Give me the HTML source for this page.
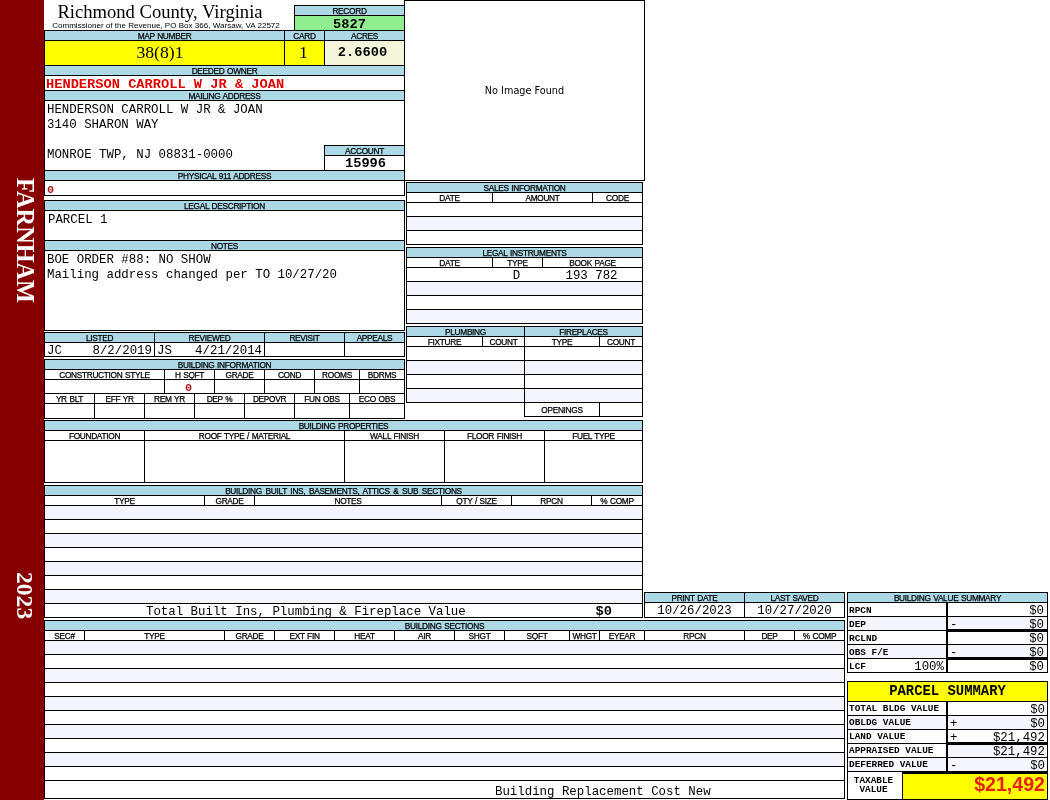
<!DOCTYPE html>
<html><head><meta charset="utf-8"><title>Richmond County, Virginia - Property Card</title>
<style>
html,body{margin:0;padding:0;background:#fff;}
body{width:1050px;height:800px;position:relative;overflow:hidden;font-family:"Liberation Sans",sans-serif;}
.r{position:absolute;}
.t{position:absolute;white-space:pre;color:#000;overflow:visible;will-change:transform;}
.h{font-family:"Liberation Sans",sans-serif;font-size:8.3px;text-align:center;letter-spacing:-0.3px;word-spacing:0.6px;-webkit-text-stroke:0.25px #000;}
.m{font-family:"Liberation Mono",monospace;font-size:12.4px;}
.mb{font-family:"Liberation Mono",monospace;font-size:13.7px;font-weight:bold;}
.ps{font-family:"Liberation Mono",monospace;font-size:13.9px;font-weight:bold;}
.sb{font-family:"Liberation Mono",monospace;font-size:9.4px;font-weight:bold;}
.ab{font-family:"Liberation Mono",monospace;font-size:11.8px;font-weight:bold;}
.c{text-align:center;}
.t.r{text-align:right;}
.red{color:#e00000;}
.dred{color:#aa1414;}
.title{font-family:"Liberation Serif",serif;font-size:18.6px;}
.sub{font-family:"Liberation Sans",sans-serif;font-size:8.06px;}
.big{font-family:"Liberation Serif",serif;font-size:17.7px;}
.side{font-family:"Liberation Serif",serif;font-weight:bold;font-size:24.3px;line-height:28px;height:28px;color:#fff;transform-origin:0 0;transform:rotate(90deg);}
.img{font-family:"DejaVu Sans","Liberation Sans",sans-serif;font-size:9.7px;}
.tot{font-family:"Liberation Sans",sans-serif;font-size:19.6px;font-weight:bold;color:#e8200c;}
</style></head>
<body>
<div class="r" style="left:0px;top:0px;width:44px;height:800px;background:#860000;"></div>
<div class="t side" style="left:39px;top:178px;">FARNHAM</div>
<div class="t side" style="left:39px;top:572px;font-size:23.6px;">2023</div>
<div class="t title c" style="left:41.5px;top:1px;width:236px;height:22px;line-height:22px;">Richmond County, Virginia</div>
<div class="t sub c" style="left:43px;top:20px;width:246px;height:11px;line-height:11px;">Commissioner of the Revenue, PO Box 366, Warsaw, VA 22572</div>
<div class="r" style="left:404px;top:0px;width:241px;height:181px;background:#000;"></div>
<div class="r" style="left:405px;top:1px;width:239px;height:179px;background:#fff;"></div>
<div class="t img c" style="left:405px;top:83.5px;width:239px;height:13px;line-height:13px;">No Image Found</div>
<div class="r" style="left:294px;top:5px;width:111px;height:26px;background:#000;"></div>
<div class="r" style="left:295px;top:6px;width:109px;height:9px;background:#add8e6;"></div>
<div class="t h" style="left:295px;top:5.75px;width:109px;height:11px;line-height:11px;">RECORD</div>
<div class="r" style="left:295px;top:16px;width:109px;height:14px;background:#90ee90;"></div>
<div class="t mb c" style="left:295px;top:16px;width:109px;height:17px;line-height:17px;">5827</div>
<div class="r" style="left:44px;top:30px;width:361px;height:166px;background:#000;"></div>
<div class="r" style="left:45px;top:31px;width:239px;height:9px;background:#add8e6;"></div>
<div class="t h" style="left:45px;top:30.75px;width:239px;height:11px;line-height:11px;">MAP NUMBER</div>
<div class="r" style="left:285px;top:31px;width:39px;height:9px;background:#add8e6;"></div>
<div class="t h" style="left:285px;top:30.75px;width:39px;height:11px;line-height:11px;">CARD</div>
<div class="r" style="left:325px;top:31px;width:79px;height:9px;background:#add8e6;"></div>
<div class="t h" style="left:325px;top:30.75px;width:79px;height:11px;line-height:11px;">ACRES</div>
<div class="r" style="left:45px;top:41px;width:239px;height:24px;background:#ffff00;"></div>
<div class="r" style="left:285px;top:41px;width:39px;height:24px;background:#ffff00;"></div>
<div class="r" style="left:325px;top:41px;width:79px;height:24px;background:#f5f5dc;"></div>
<div class="t big c" style="left:45px;top:41.75px;width:230px;height:21px;line-height:21px;">38(8)1</div>
<div class="t big c" style="left:284px;top:41.75px;width:39px;height:21px;line-height:21px;">1</div>
<div class="t mb c" style="left:324px;top:44px;width:77px;height:17px;line-height:17px;">2.6600</div>
<div class="r" style="left:45px;top:66px;width:359px;height:9px;background:#add8e6;"></div>
<div class="t h" style="left:45px;top:65.75px;width:359px;height:11px;line-height:11px;">DEEDED OWNER</div>
<div class="r" style="left:45px;top:76px;width:359px;height:14px;background:#fff;"></div>
<div class="t mb red" style="left:46px;top:76px;width:358px;height:17px;line-height:17px;">HENDERSON CARROLL W JR &amp; JOAN</div>
<div class="r" style="left:45px;top:91px;width:359px;height:9px;background:#add8e6;"></div>
<div class="t h" style="left:45px;top:90.75px;width:359px;height:11px;line-height:11px;">MAILING ADDRESS</div>
<div class="r" style="left:45px;top:101px;width:359px;height:69px;background:#fff;"></div>
<div class="t m" style="left:47px;top:102px;width:300px;height:16px;line-height:16px;">HENDERSON CARROLL W JR &amp; JOAN</div>
<div class="t m" style="left:47px;top:117px;width:300px;height:16px;line-height:16px;">3140 SHARON WAY</div>
<div class="t m" style="left:47px;top:147px;width:300px;height:16px;line-height:16px;">MONROE TWP, NJ 08831-0000</div>
<div class="r" style="left:324px;top:145px;width:81px;height:26px;background:#000;"></div>
<div class="r" style="left:325px;top:146px;width:79px;height:9px;background:#add8e6;"></div>
<div class="t h" style="left:325px;top:145.75px;width:79px;height:11px;line-height:11px;">ACCOUNT</div>
<div class="r" style="left:325px;top:156px;width:79px;height:14px;background:#fff;"></div>
<div class="t mb c" style="left:327px;top:155px;width:77px;height:17px;line-height:17px;">15996</div>
<div class="r" style="left:45px;top:171px;width:359px;height:9px;background:#add8e6;"></div>
<div class="t h" style="left:45px;top:170.75px;width:359px;height:11px;line-height:11px;">PHYSICAL 911 ADDRESS</div>
<div class="r" style="left:45px;top:181px;width:359px;height:14px;background:#fff;"></div>
<div class="t ab dred" style="left:46.5px;top:182.5px;width:100px;height:15px;line-height:15px;">0</div>
<div class="r" style="left:44px;top:200px;width:361px;height:131px;background:#000;"></div>
<div class="r" style="left:45px;top:201px;width:359px;height:9px;background:#add8e6;"></div>
<div class="t h" style="left:45px;top:200.75px;width:359px;height:11px;line-height:11px;">LEGAL DESCRIPTION</div>
<div class="r" style="left:45px;top:211px;width:359px;height:29px;background:#fff;"></div>
<div class="t m" style="left:47.5px;top:212px;width:350px;height:16px;line-height:16px;">PARCEL 1</div>
<div class="r" style="left:45px;top:241px;width:359px;height:9px;background:#add8e6;"></div>
<div class="t h" style="left:45px;top:240.75px;width:359px;height:11px;line-height:11px;">NOTES</div>
<div class="r" style="left:45px;top:251px;width:359px;height:79px;background:#fff;"></div>
<div class="t m" style="left:47px;top:252px;width:355px;height:16px;line-height:16px;">BOE ORDER #88: NO SHOW</div>
<div class="t m" style="left:47px;top:267px;width:355px;height:16px;line-height:16px;">Mailing address changed per TO 10/27/20</div>
<div class="r" style="left:44px;top:332px;width:361px;height:25px;background:#000;"></div>
<div class="r" style="left:45px;top:333px;width:109px;height:9px;background:#add8e6;"></div>
<div class="t h" style="left:45px;top:332.75px;width:109px;height:11px;line-height:11px;">LISTED</div>
<div class="r" style="left:45px;top:343px;width:109px;height:13px;background:#fff;"></div>
<div class="r" style="left:155px;top:333px;width:109px;height:9px;background:#add8e6;"></div>
<div class="t h" style="left:155px;top:332.75px;width:109px;height:11px;line-height:11px;">REVIEWED</div>
<div class="r" style="left:155px;top:343px;width:109px;height:13px;background:#fff;"></div>
<div class="r" style="left:265px;top:333px;width:79px;height:9px;background:#add8e6;"></div>
<div class="t h" style="left:265px;top:332.75px;width:79px;height:11px;line-height:11px;">REVISIT</div>
<div class="r" style="left:265px;top:343px;width:79px;height:13px;background:#fff;"></div>
<div class="r" style="left:345px;top:333px;width:59px;height:9px;background:#add8e6;"></div>
<div class="t h" style="left:345px;top:332.75px;width:59px;height:11px;line-height:11px;">APPEALS</div>
<div class="r" style="left:345px;top:343px;width:59px;height:13px;background:#fff;"></div>
<div class="t m" style="left:46.5px;top:343px;width:40px;height:16px;line-height:16px;">JC</div>
<div class="t m r" style="left:80px;top:343px;width:72px;height:16px;line-height:16px;">8/2/2019</div>
<div class="t m" style="left:156.5px;top:343px;width:40px;height:16px;line-height:16px;">JS</div>
<div class="t m r" style="left:180px;top:343px;width:82px;height:16px;line-height:16px;">4/21/2014</div>
<div class="r" style="left:44px;top:359px;width:361px;height:60px;background:#000;"></div>
<div class="r" style="left:45px;top:360px;width:359px;height:9px;background:#add8e6;"></div>
<div class="t h" style="left:45px;top:359.75px;width:359px;height:11px;line-height:11px;">BUILDING INFORMATION</div>
<div class="r" style="left:45px;top:370px;width:119px;height:9px;background:#fff;"></div>
<div class="t h" style="left:45px;top:369.75px;width:119px;height:11px;line-height:11px;">CONSTRUCTION STYLE</div>
<div class="r" style="left:45px;top:380px;width:119px;height:13px;background:#fff;"></div>
<div class="r" style="left:165px;top:370px;width:49px;height:9px;background:#fff;"></div>
<div class="t h" style="left:165px;top:369.75px;width:49px;height:11px;line-height:11px;">H SQFT</div>
<div class="r" style="left:165px;top:380px;width:49px;height:13px;background:#fff;"></div>
<div class="r" style="left:215px;top:370px;width:49px;height:9px;background:#fff;"></div>
<div class="t h" style="left:215px;top:369.75px;width:49px;height:11px;line-height:11px;">GRADE</div>
<div class="r" style="left:215px;top:380px;width:49px;height:13px;background:#fff;"></div>
<div class="r" style="left:265px;top:370px;width:49px;height:9px;background:#fff;"></div>
<div class="t h" style="left:265px;top:369.75px;width:49px;height:11px;line-height:11px;">COND</div>
<div class="r" style="left:265px;top:380px;width:49px;height:13px;background:#fff;"></div>
<div class="r" style="left:315px;top:370px;width:44px;height:9px;background:#fff;"></div>
<div class="t h" style="left:315px;top:369.75px;width:44px;height:11px;line-height:11px;">ROOMS</div>
<div class="r" style="left:315px;top:380px;width:44px;height:13px;background:#fff;"></div>
<div class="r" style="left:360px;top:370px;width:44px;height:9px;background:#fff;"></div>
<div class="t h" style="left:360px;top:369.75px;width:44px;height:11px;line-height:11px;">BDRMS</div>
<div class="r" style="left:360px;top:380px;width:44px;height:13px;background:#fff;"></div>
<div class="t ab dred c" style="left:164px;top:380.5px;width:49px;height:15px;line-height:15px;">0</div>
<div class="r" style="left:45px;top:394px;width:49px;height:9px;background:#fff;"></div>
<div class="t h" style="left:45px;top:393.75px;width:49px;height:11px;line-height:11px;">YR BLT</div>
<div class="r" style="left:45px;top:404px;width:49px;height:14px;background:#fff;"></div>
<div class="r" style="left:95px;top:394px;width:49px;height:9px;background:#fff;"></div>
<div class="t h" style="left:95px;top:393.75px;width:49px;height:11px;line-height:11px;">EFF YR</div>
<div class="r" style="left:95px;top:404px;width:49px;height:14px;background:#fff;"></div>
<div class="r" style="left:145px;top:394px;width:49px;height:9px;background:#fff;"></div>
<div class="t h" style="left:145px;top:393.75px;width:49px;height:11px;line-height:11px;">REM YR</div>
<div class="r" style="left:145px;top:404px;width:49px;height:14px;background:#fff;"></div>
<div class="r" style="left:195px;top:394px;width:49px;height:9px;background:#fff;"></div>
<div class="t h" style="left:195px;top:393.75px;width:49px;height:11px;line-height:11px;">DEP %</div>
<div class="r" style="left:195px;top:404px;width:49px;height:14px;background:#fff;"></div>
<div class="r" style="left:245px;top:394px;width:49px;height:9px;background:#fff;"></div>
<div class="t h" style="left:245px;top:393.75px;width:49px;height:11px;line-height:11px;">DEPOVR</div>
<div class="r" style="left:245px;top:404px;width:49px;height:14px;background:#fff;"></div>
<div class="r" style="left:295px;top:394px;width:54px;height:9px;background:#fff;"></div>
<div class="t h" style="left:295px;top:393.75px;width:54px;height:11px;line-height:11px;">FUN OBS</div>
<div class="r" style="left:295px;top:404px;width:54px;height:14px;background:#fff;"></div>
<div class="r" style="left:350px;top:394px;width:54px;height:9px;background:#fff;"></div>
<div class="t h" style="left:350px;top:393.75px;width:54px;height:11px;line-height:11px;">ECO OBS</div>
<div class="r" style="left:350px;top:404px;width:54px;height:14px;background:#fff;"></div>
<div class="r" style="left:44px;top:420px;width:599px;height:63px;background:#000;"></div>
<div class="r" style="left:45px;top:421px;width:597px;height:9px;background:#add8e6;"></div>
<div class="t h" style="left:45px;top:420.75px;width:597px;height:11px;line-height:11px;">BUILDING PROPERTIES</div>
<div class="r" style="left:45px;top:431px;width:99px;height:9px;background:#fff;"></div>
<div class="t h" style="left:45px;top:430.75px;width:99px;height:11px;line-height:11px;">FOUNDATION</div>
<div class="r" style="left:45px;top:441px;width:99px;height:41px;background:#fff;"></div>
<div class="r" style="left:145px;top:431px;width:199px;height:9px;background:#fff;"></div>
<div class="t h" style="left:145px;top:430.75px;width:199px;height:11px;line-height:11px;">ROOF TYPE / MATERIAL</div>
<div class="r" style="left:145px;top:441px;width:199px;height:41px;background:#fff;"></div>
<div class="r" style="left:345px;top:431px;width:99px;height:9px;background:#fff;"></div>
<div class="t h" style="left:345px;top:430.75px;width:99px;height:11px;line-height:11px;">WALL FINISH</div>
<div class="r" style="left:345px;top:441px;width:99px;height:41px;background:#fff;"></div>
<div class="r" style="left:445px;top:431px;width:99px;height:9px;background:#fff;"></div>
<div class="t h" style="left:445px;top:430.75px;width:99px;height:11px;line-height:11px;">FLOOR FINISH</div>
<div class="r" style="left:445px;top:441px;width:99px;height:41px;background:#fff;"></div>
<div class="r" style="left:545px;top:431px;width:97px;height:9px;background:#fff;"></div>
<div class="t h" style="left:545px;top:430.75px;width:97px;height:11px;line-height:11px;">FUEL TYPE</div>
<div class="r" style="left:545px;top:441px;width:97px;height:41px;background:#fff;"></div>
<div class="r" style="left:44px;top:485px;width:599px;height:133px;background:#000;"></div>
<div class="r" style="left:45px;top:486px;width:597px;height:9px;background:#add8e6;"></div>
<div class="t h" style="left:45px;top:485.75px;width:597px;height:11px;line-height:11px;word-spacing:1.6px;">BUILDING BUILT INS, BASEMENTS, ATTICS &amp; SUB SECTIONS</div>
<div class="r" style="left:45px;top:496px;width:159px;height:9px;background:#fff;"></div>
<div class="t h" style="left:45px;top:495.75px;width:159px;height:11px;line-height:11px;">TYPE</div>
<div class="r" style="left:205px;top:496px;width:49px;height:9px;background:#fff;"></div>
<div class="t h" style="left:205px;top:495.75px;width:49px;height:11px;line-height:11px;">GRADE</div>
<div class="r" style="left:255px;top:496px;width:186px;height:9px;background:#fff;"></div>
<div class="t h" style="left:255px;top:495.75px;width:186px;height:11px;line-height:11px;">NOTES</div>
<div class="r" style="left:442px;top:496px;width:69px;height:9px;background:#fff;"></div>
<div class="t h" style="left:442px;top:495.75px;width:69px;height:11px;line-height:11px;">QTY / SIZE</div>
<div class="r" style="left:512px;top:496px;width:79px;height:9px;background:#fff;"></div>
<div class="t h" style="left:512px;top:495.75px;width:79px;height:11px;line-height:11px;">RPCN</div>
<div class="r" style="left:592px;top:496px;width:50px;height:9px;background:#fff;"></div>
<div class="t h" style="left:592px;top:495.75px;width:50px;height:11px;line-height:11px;">% COMP</div>
<div class="r" style="left:45px;top:506px;width:597px;height:13px;background:#f4f5fd;"></div>
<div class="r" style="left:45px;top:520px;width:597px;height:13px;background:#fff;"></div>
<div class="r" style="left:45px;top:534px;width:597px;height:13px;background:#f4f5fd;"></div>
<div class="r" style="left:45px;top:548px;width:597px;height:13px;background:#fff;"></div>
<div class="r" style="left:45px;top:562px;width:597px;height:13px;background:#f4f5fd;"></div>
<div class="r" style="left:45px;top:576px;width:597px;height:13px;background:#fff;"></div>
<div class="r" style="left:45px;top:590px;width:597px;height:13px;background:#f4f5fd;"></div>
<div class="r" style="left:45px;top:604px;width:597px;height:13px;background:#fff;"></div>
<div class="t m" style="left:146px;top:604px;width:330px;height:16px;line-height:16px;">Total Built Ins, Plumbing &amp; Fireplace Value</div>
<div class="t mb r" style="left:560px;top:603px;width:52px;height:17px;line-height:17px;">$0</div>
<div class="r" style="left:406px;top:182px;width:237px;height:63px;background:#000;"></div>
<div class="r" style="left:407px;top:183px;width:235px;height:9px;background:#add8e6;"></div>
<div class="t h" style="left:407px;top:182.75px;width:235px;height:11px;line-height:11px;">SALES INFORMATION</div>
<div class="r" style="left:407px;top:193px;width:85px;height:9px;background:#fff;"></div>
<div class="t h" style="left:407px;top:192.75px;width:85px;height:11px;line-height:11px;">DATE</div>
<div class="r" style="left:493px;top:193px;width:99px;height:9px;background:#fff;"></div>
<div class="t h" style="left:493px;top:192.75px;width:99px;height:11px;line-height:11px;">AMOUNT</div>
<div class="r" style="left:593px;top:193px;width:49px;height:9px;background:#fff;"></div>
<div class="t h" style="left:593px;top:192.75px;width:49px;height:11px;line-height:11px;">CODE</div>
<div class="r" style="left:407px;top:203px;width:235px;height:13px;background:#fff;"></div>
<div class="r" style="left:407px;top:217px;width:235px;height:13px;background:#f4f5fd;"></div>
<div class="r" style="left:407px;top:231px;width:235px;height:13px;background:#fff;"></div>
<div class="r" style="left:406px;top:247px;width:237px;height:77px;background:#000;"></div>
<div class="r" style="left:407px;top:248px;width:235px;height:9px;background:#add8e6;"></div>
<div class="t h" style="left:407px;top:247.75px;width:235px;height:11px;line-height:11px;">LEGAL INSTRUMENTS</div>
<div class="r" style="left:407px;top:258px;width:85px;height:9px;background:#fff;"></div>
<div class="t h" style="left:407px;top:257.75px;width:85px;height:11px;line-height:11px;">DATE</div>
<div class="r" style="left:493px;top:258px;width:49px;height:9px;background:#fff;"></div>
<div class="t h" style="left:493px;top:257.75px;width:49px;height:11px;line-height:11px;">TYPE</div>
<div class="r" style="left:543px;top:258px;width:99px;height:9px;background:#fff;"></div>
<div class="t h" style="left:543px;top:257.75px;width:99px;height:11px;line-height:11px;">BOOK PAGE</div>
<div class="r" style="left:407px;top:268px;width:235px;height:13px;background:#fff;"></div>
<div class="r" style="left:407px;top:282px;width:235px;height:13px;background:#f4f5fd;"></div>
<div class="r" style="left:407px;top:296px;width:235px;height:13px;background:#fff;"></div>
<div class="r" style="left:407px;top:310px;width:235px;height:13px;background:#f4f5fd;"></div>
<div class="t m c" style="left:492px;top:268px;width:49px;height:16px;line-height:16px;">D</div>
<div class="t m c" style="left:542px;top:268px;width:99px;height:16px;line-height:16px;">193 782</div>
<div class="r" style="left:406px;top:326px;width:237px;height:77px;background:#000;"></div>
<div class="r" style="left:524px;top:402px;width:119px;height:15px;background:#000;"></div>
<div class="r" style="left:407px;top:327px;width:117px;height:9px;background:#add8e6;"></div>
<div class="t h" style="left:407px;top:326.75px;width:117px;height:11px;line-height:11px;">PLUMBING</div>
<div class="r" style="left:525px;top:327px;width:117px;height:9px;background:#add8e6;"></div>
<div class="t h" style="left:525px;top:326.75px;width:117px;height:11px;line-height:11px;">FIREPLACES</div>
<div class="r" style="left:407px;top:337px;width:75px;height:9px;background:#fff;"></div>
<div class="t h" style="left:407px;top:336.75px;width:75px;height:11px;line-height:11px;">FIXTURE</div>
<div class="r" style="left:483px;top:337px;width:41px;height:9px;background:#fff;"></div>
<div class="t h" style="left:483px;top:336.75px;width:41px;height:11px;line-height:11px;">COUNT</div>
<div class="r" style="left:525px;top:337px;width:74px;height:9px;background:#fff;"></div>
<div class="t h" style="left:525px;top:336.75px;width:74px;height:11px;line-height:11px;">TYPE</div>
<div class="r" style="left:600px;top:337px;width:42px;height:9px;background:#fff;"></div>
<div class="t h" style="left:600px;top:336.75px;width:42px;height:11px;line-height:11px;">COUNT</div>
<div class="r" style="left:407px;top:347px;width:117px;height:13px;background:#fff;"></div>
<div class="r" style="left:525px;top:347px;width:117px;height:13px;background:#fff;"></div>
<div class="r" style="left:407px;top:361px;width:117px;height:13px;background:#f4f5fd;"></div>
<div class="r" style="left:525px;top:361px;width:117px;height:13px;background:#f4f5fd;"></div>
<div class="r" style="left:407px;top:375px;width:117px;height:13px;background:#fff;"></div>
<div class="r" style="left:525px;top:375px;width:117px;height:13px;background:#fff;"></div>
<div class="r" style="left:407px;top:389px;width:117px;height:13px;background:#f4f5fd;"></div>
<div class="r" style="left:525px;top:389px;width:117px;height:13px;background:#f4f5fd;"></div>
<div class="r" style="left:525px;top:403px;width:74px;height:13px;background:#fff;"></div>
<div class="t h" style="left:525px;top:404.75px;width:74px;height:11px;line-height:11px;">OPENINGS</div>
<div class="r" style="left:600px;top:403px;width:42px;height:13px;background:#fff;"></div>
<div class="r" style="left:644px;top:592px;width:201px;height:26px;background:#000;"></div>
<div class="r" style="left:645px;top:593px;width:99px;height:9px;background:#add8e6;"></div>
<div class="t h" style="left:645px;top:592.75px;width:99px;height:11px;line-height:11px;">PRINT DATE</div>
<div class="r" style="left:745px;top:593px;width:99px;height:9px;background:#add8e6;"></div>
<div class="t h" style="left:745px;top:592.75px;width:99px;height:11px;line-height:11px;">LAST SAVED</div>
<div class="r" style="left:645px;top:603px;width:99px;height:14px;background:#fff;"></div>
<div class="r" style="left:745px;top:603px;width:99px;height:14px;background:#fff;"></div>
<div class="t m c" style="left:645px;top:603px;width:99px;height:16px;line-height:16px;">10/26/2023</div>
<div class="t m c" style="left:745px;top:603px;width:99px;height:16px;line-height:16px;">10/27/2020</div>
<div class="r" style="left:44px;top:620px;width:801px;height:179px;background:#000;"></div>
<div class="r" style="left:45px;top:621px;width:799px;height:9px;background:#add8e6;"></div>
<div class="t h" style="left:45px;top:620.75px;width:799px;height:11px;line-height:11px;">BUILDING SECTIONS</div>
<div class="r" style="left:45px;top:631px;width:39px;height:9px;background:#fff;"></div>
<div class="t h" style="left:45px;top:630.75px;width:39px;height:11px;line-height:11px;">SEC#</div>
<div class="r" style="left:85px;top:631px;width:139px;height:9px;background:#fff;"></div>
<div class="t h" style="left:85px;top:630.75px;width:139px;height:11px;line-height:11px;">TYPE</div>
<div class="r" style="left:225px;top:631px;width:49px;height:9px;background:#fff;"></div>
<div class="t h" style="left:225px;top:630.75px;width:49px;height:11px;line-height:11px;">GRADE</div>
<div class="r" style="left:275px;top:631px;width:59px;height:9px;background:#fff;"></div>
<div class="t h" style="left:275px;top:630.75px;width:59px;height:11px;line-height:11px;">EXT FIN</div>
<div class="r" style="left:335px;top:631px;width:59px;height:9px;background:#fff;"></div>
<div class="t h" style="left:335px;top:630.75px;width:59px;height:11px;line-height:11px;">HEAT</div>
<div class="r" style="left:395px;top:631px;width:59px;height:9px;background:#fff;"></div>
<div class="t h" style="left:395px;top:630.75px;width:59px;height:11px;line-height:11px;">AIR</div>
<div class="r" style="left:455px;top:631px;width:49px;height:9px;background:#fff;"></div>
<div class="t h" style="left:455px;top:630.75px;width:49px;height:11px;line-height:11px;">SHGT</div>
<div class="r" style="left:505px;top:631px;width:64px;height:9px;background:#fff;"></div>
<div class="t h" style="left:505px;top:630.75px;width:64px;height:11px;line-height:11px;">SQFT</div>
<div class="r" style="left:570px;top:631px;width:29px;height:9px;background:#fff;"></div>
<div class="t h" style="left:570px;top:630.75px;width:29px;height:11px;line-height:11px;">WHGT</div>
<div class="r" style="left:600px;top:631px;width:44px;height:9px;background:#fff;"></div>
<div class="t h" style="left:600px;top:630.75px;width:44px;height:11px;line-height:11px;">EYEAR</div>
<div class="r" style="left:645px;top:631px;width:99px;height:9px;background:#fff;"></div>
<div class="t h" style="left:645px;top:630.75px;width:99px;height:11px;line-height:11px;">RPCN</div>
<div class="r" style="left:745px;top:631px;width:49px;height:9px;background:#fff;"></div>
<div class="t h" style="left:745px;top:630.75px;width:49px;height:11px;line-height:11px;">DEP</div>
<div class="r" style="left:795px;top:631px;width:49px;height:9px;background:#fff;"></div>
<div class="t h" style="left:795px;top:630.75px;width:49px;height:11px;line-height:11px;">% COMP</div>
<div class="r" style="left:45px;top:641px;width:799px;height:13px;background:#f4f5fd;"></div>
<div class="r" style="left:45px;top:655px;width:799px;height:13px;background:#fff;"></div>
<div class="r" style="left:45px;top:669px;width:799px;height:13px;background:#f4f5fd;"></div>
<div class="r" style="left:45px;top:683px;width:799px;height:13px;background:#fff;"></div>
<div class="r" style="left:45px;top:697px;width:799px;height:13px;background:#f4f5fd;"></div>
<div class="r" style="left:45px;top:711px;width:799px;height:13px;background:#fff;"></div>
<div class="r" style="left:45px;top:725px;width:799px;height:13px;background:#f4f5fd;"></div>
<div class="r" style="left:45px;top:739px;width:799px;height:13px;background:#fff;"></div>
<div class="r" style="left:45px;top:753px;width:799px;height:13px;background:#f4f5fd;"></div>
<div class="r" style="left:45px;top:767px;width:799px;height:13px;background:#fff;"></div>
<div class="r" style="left:45px;top:781px;width:799px;height:17px;background:#fff;"></div>
<div class="t m" style="left:495px;top:784px;width:230px;height:16px;line-height:16px;">Building Replacement Cost New</div>
<div class="r" style="left:847px;top:592px;width:201px;height:81px;background:#000;"></div>
<div class="r" style="left:848px;top:593px;width:199px;height:9px;background:#add8e6;"></div>
<div class="t h" style="left:848px;top:592.75px;width:199px;height:11px;line-height:11px;">BUILDING VALUE SUMMARY</div>
<div class="r" style="left:848px;top:603px;width:98px;height:13px;background:#fff;"></div>
<div class="r" style="left:948px;top:603px;width:99px;height:13px;background:#fff;"></div>
<div class="t sb" style="left:849px;top:604.75px;width:90px;height:12px;line-height:12px;">RPCN</div>
<div class="t m r" style="left:948px;top:603px;width:96px;height:16px;line-height:16px;">$0</div>
<div class="r" style="left:848px;top:617px;width:98px;height:13px;background:#f4f5fd;"></div>
<div class="r" style="left:948px;top:617px;width:99px;height:13px;background:#f4f5fd;"></div>
<div class="t sb" style="left:849px;top:618.75px;width:90px;height:12px;line-height:12px;">DEP</div>
<div class="t m r" style="left:948px;top:617px;width:96px;height:16px;line-height:16px;">$0</div>
<div class="t m" style="left:950px;top:617px;width:10px;height:16px;line-height:16px;">-</div>
<div class="r" style="left:848px;top:631px;width:98px;height:13px;background:#fff;"></div>
<div class="r" style="left:948px;top:631px;width:99px;height:13px;background:#fff;"></div>
<div class="t sb" style="left:849px;top:632.75px;width:90px;height:12px;line-height:12px;">RCLND</div>
<div class="t m r" style="left:948px;top:631px;width:96px;height:16px;line-height:16px;">$0</div>
<div class="r" style="left:848px;top:645px;width:98px;height:13px;background:#f4f5fd;"></div>
<div class="r" style="left:948px;top:645px;width:99px;height:13px;background:#f4f5fd;"></div>
<div class="t sb" style="left:849px;top:646.75px;width:90px;height:12px;line-height:12px;">OBS F/E</div>
<div class="t m r" style="left:948px;top:645px;width:96px;height:16px;line-height:16px;">$0</div>
<div class="t m" style="left:950px;top:645px;width:10px;height:16px;line-height:16px;">-</div>
<div class="r" style="left:848px;top:659px;width:98px;height:13px;background:#fff;"></div>
<div class="r" style="left:948px;top:659px;width:99px;height:13px;background:#fff;"></div>
<div class="t sb" style="left:849px;top:660.75px;width:90px;height:12px;line-height:12px;">LCF</div>
<div class="t m r" style="left:948px;top:659px;width:96px;height:16px;line-height:16px;">$0</div>
<div class="r" style="left:948px;top:629px;width:99px;height:3px;background:#000;"></div>
<div class="r" style="left:948px;top:657px;width:99px;height:3px;background:#000;"></div>
<div class="t m r" style="left:900px;top:659px;width:44px;height:16px;line-height:16px;">100%</div>
<div class="r" style="left:847px;top:681px;width:201px;height:119px;background:#000;"></div>
<div class="r" style="left:848px;top:682px;width:199px;height:19px;background:#ffff00;"></div>
<div class="t ps c" style="left:847.5px;top:683px;width:199px;height:17px;line-height:17px;">PARCEL SUMMARY</div>
<div class="r" style="left:848px;top:702px;width:98px;height:13px;background:#fff;"></div>
<div class="r" style="left:948px;top:702px;width:99px;height:13px;background:#fff;"></div>
<div class="t sb" style="left:849px;top:702.75px;width:97px;height:12px;line-height:12px;">TOTAL BLDG VALUE</div>
<div class="t m r" style="left:948px;top:702px;width:97px;height:16px;line-height:16px;">$0</div>
<div class="r" style="left:848px;top:716px;width:98px;height:13px;background:#f4f5fd;"></div>
<div class="r" style="left:948px;top:716px;width:99px;height:13px;background:#f4f5fd;"></div>
<div class="t sb" style="left:849px;top:716.75px;width:97px;height:12px;line-height:12px;">OBLDG VALUE</div>
<div class="t m r" style="left:948px;top:716px;width:97px;height:16px;line-height:16px;">$0</div>
<div class="t m" style="left:950px;top:716px;width:10px;height:16px;line-height:16px;">+</div>
<div class="r" style="left:848px;top:730px;width:98px;height:13px;background:#fff;"></div>
<div class="r" style="left:948px;top:730px;width:99px;height:13px;background:#fff;"></div>
<div class="t sb" style="left:849px;top:730.75px;width:97px;height:12px;line-height:12px;">LAND VALUE</div>
<div class="t m r" style="left:948px;top:730px;width:97px;height:16px;line-height:16px;">$21,492</div>
<div class="t m" style="left:950px;top:730px;width:10px;height:16px;line-height:16px;">+</div>
<div class="r" style="left:848px;top:744px;width:98px;height:13px;background:#fff;"></div>
<div class="r" style="left:948px;top:744px;width:99px;height:13px;background:#f4f5fd;"></div>
<div class="t sb" style="left:849px;top:744.75px;width:97px;height:12px;line-height:12px;">APPRAISED VALUE</div>
<div class="t m r" style="left:948px;top:744px;width:97px;height:16px;line-height:16px;">$21,492</div>
<div class="r" style="left:848px;top:758px;width:98px;height:13px;background:#f4f5fd;"></div>
<div class="r" style="left:948px;top:758px;width:99px;height:13px;background:#f4f5fd;"></div>
<div class="t sb" style="left:849px;top:758.75px;width:97px;height:12px;line-height:12px;">DEFERRED VALUE</div>
<div class="t m r" style="left:948px;top:758px;width:97px;height:16px;line-height:16px;">$0</div>
<div class="t m" style="left:950px;top:758px;width:10px;height:16px;line-height:16px;">-</div>
<div class="r" style="left:948px;top:742px;width:99px;height:3px;background:#000;"></div>
<div class="r" style="left:902px;top:771px;width:145px;height:3px;background:#000;"></div>
<div class="r" style="left:848px;top:772px;width:54px;height:27px;background:#fff;"></div>
<div class="r" style="left:903px;top:774px;width:144px;height:25px;background:#ffff00;"></div>
<div class="t sb c" style="left:846px;top:774.75px;width:55px;height:12px;line-height:12px;">TAXABLE</div>
<div class="t sb c" style="left:846px;top:783.75px;width:55px;height:12px;line-height:12px;">VALUE</div>
<div class="t tot r" style="left:904px;top:773px;width:141px;height:23px;line-height:23px;">$21,492</div>
</body></html>
